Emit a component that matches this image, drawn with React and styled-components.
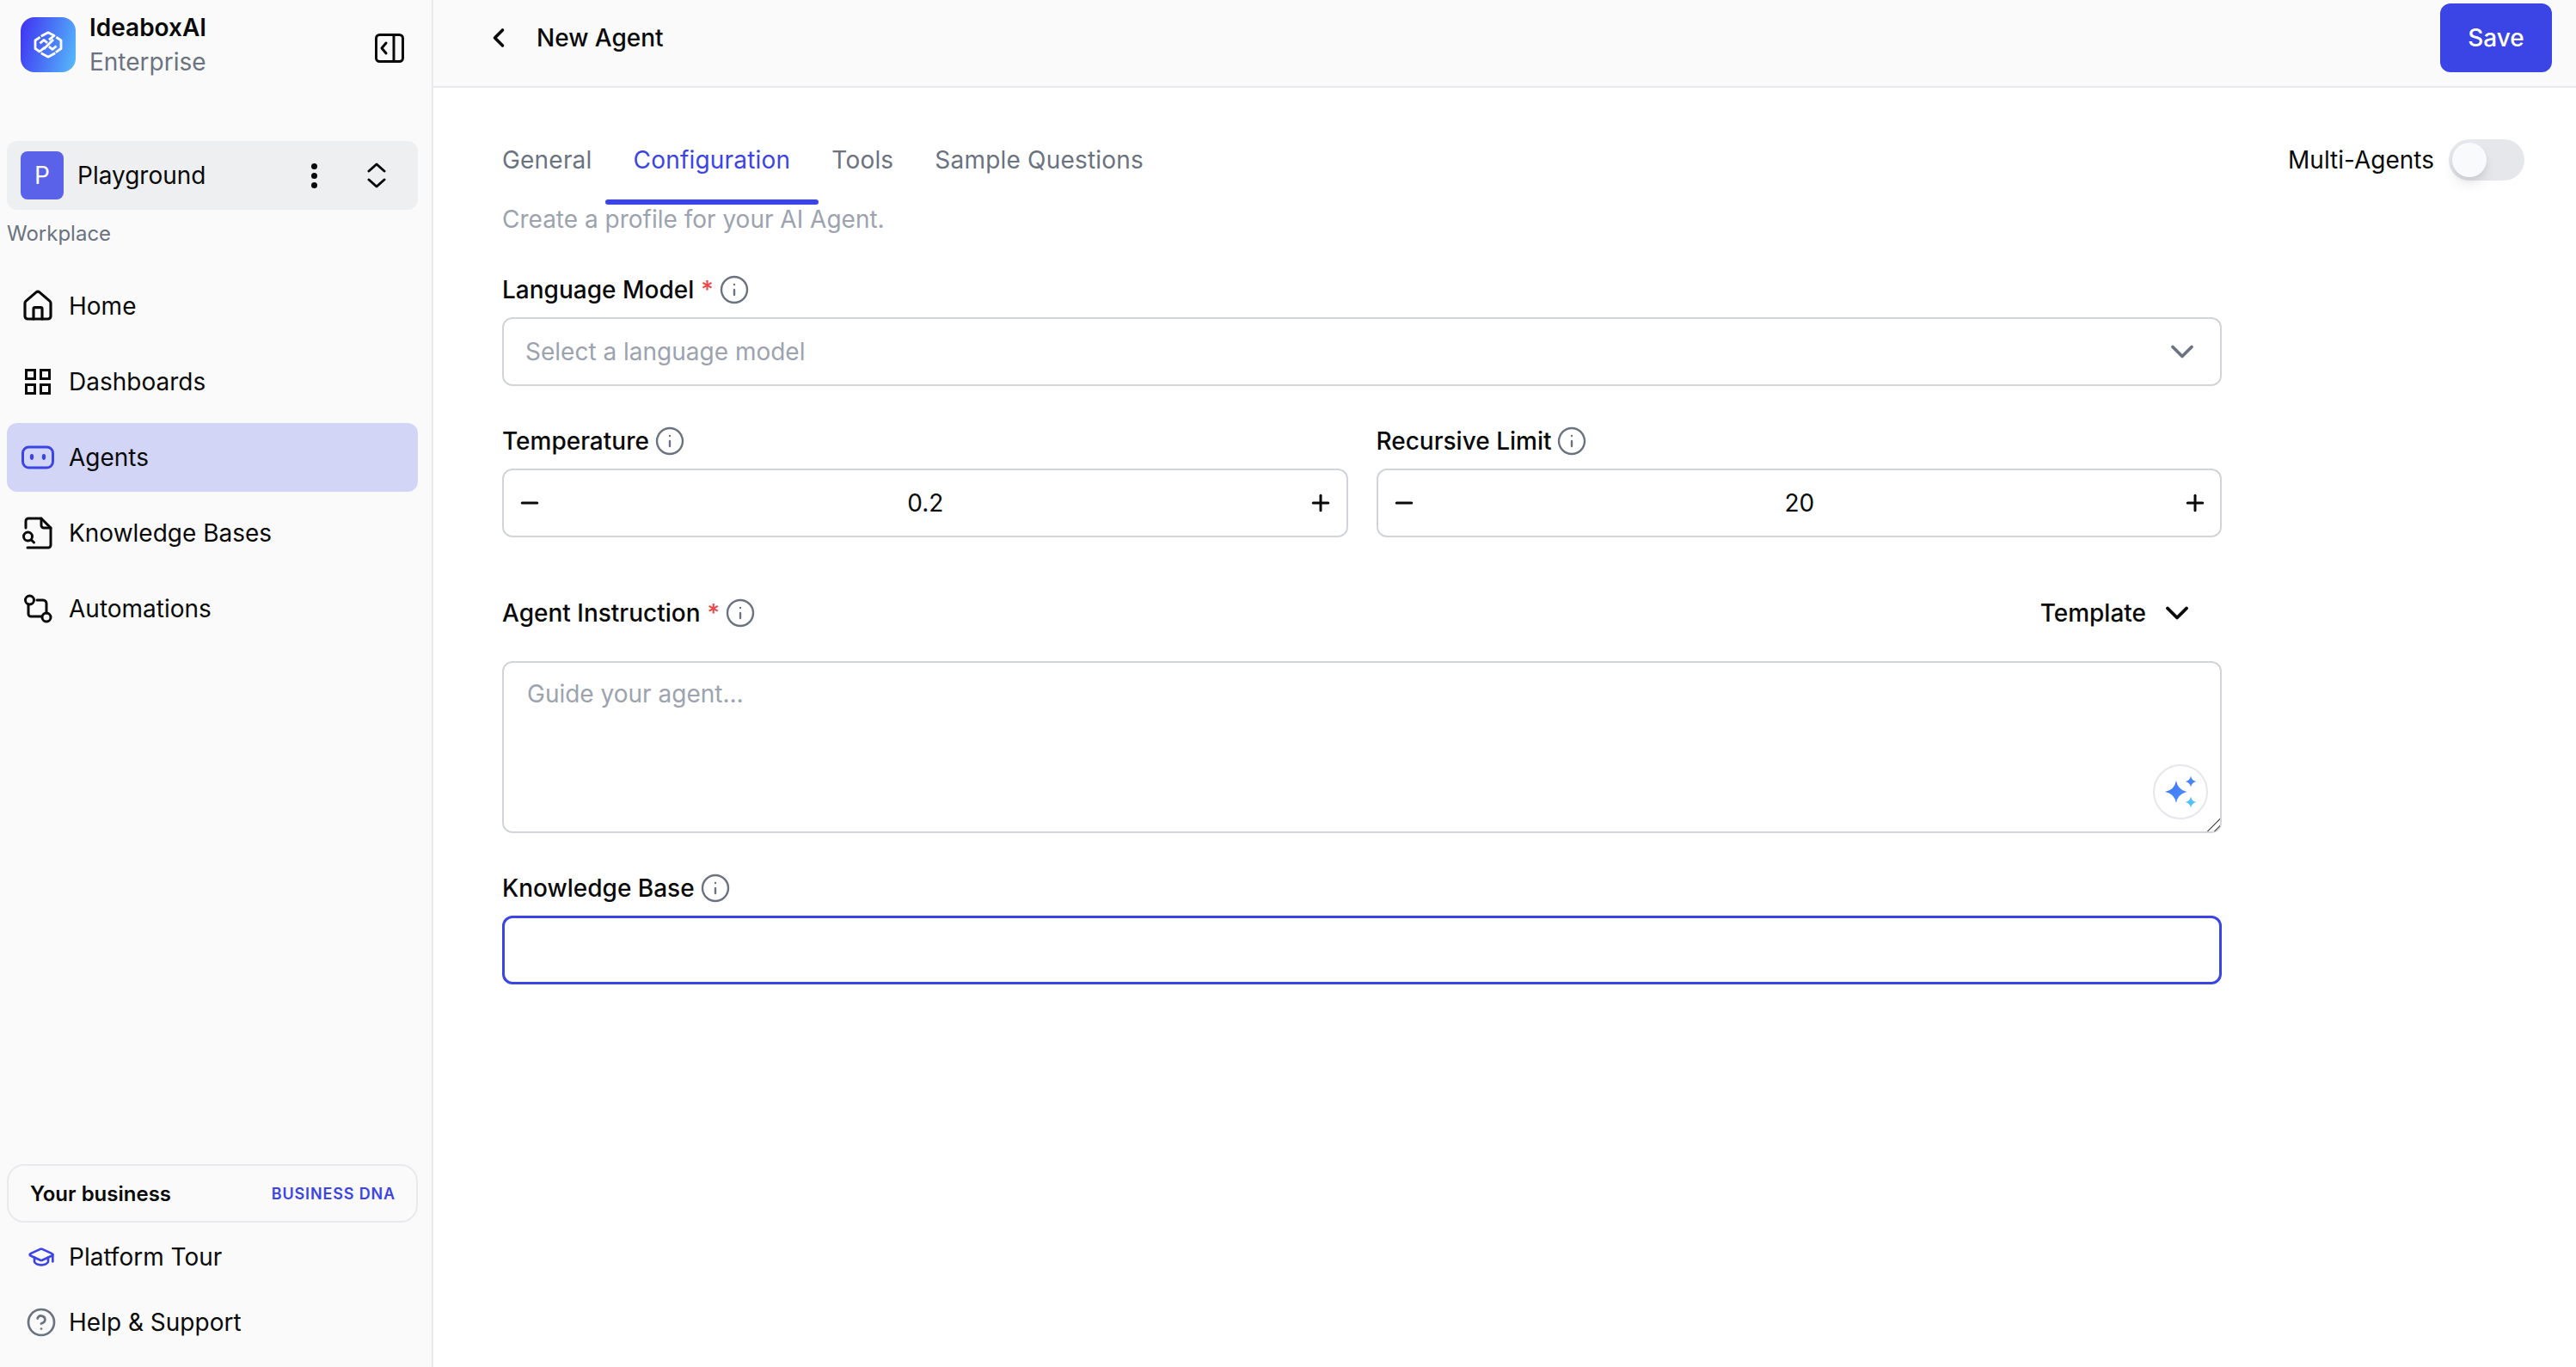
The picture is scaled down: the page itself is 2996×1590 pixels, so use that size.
import React from 'react'
import styled, { createGlobalStyle } from 'styled-components'
import { ChevronDown, ChevronLeft, CircleHelp, GraduationCap, Info, Minus, Plus } from 'lucide-react'

const GlobalStyle = createGlobalStyle`
  html, body {
    margin: 0;
    padding: 0;
    background: #fff;
  }
  * {
    box-sizing: border-box;
  }
  body {
    font-family: Inter, "Noto Sans", sans-serif;
    color: #0a0a0a;
  }
`

const Page = styled.div`
  display: flex;
  height: 1590px;
  overflow: hidden;
`

const Sidebar = styled.aside`
  display: flex;
  flex-direction: column;
  flex: 0 0 504px;
  padding: 0 16px 0 8px;
  background: #fafafb;
  border-right: 2px solid #e9eaee;
`

const Brand = styled.div`
  display: flex;
  align-items: center;
  height: 164px;
  padding: 20px 16px 80px 16px;
`

const LogoMark = styled.div`
  display: flex;
  align-items: center;
  justify-content: center;
  flex: 0 0 64px;
  width: 64px;
  height: 64px;
  border-radius: 16px;
  background: linear-gradient(105deg, #4030f2 0%, #4a7cf6 55%, #57bdfb 100%);
`

const BrandText = styled.div`
  display: flex;
  flex-direction: column;
  margin-left: 16px;
  flex: 1;
`

const BrandName = styled.span`
  font-size: 28px;
  line-height: 40px;
  font-weight: 600;
`

const BrandPlan = styled.span`
  font-size: 28px;
  line-height: 40px;
  color: #6b7280;
`

const CollapseBtn = styled.button`
  display: flex;
  padding: 0;
  margin: 7px 0 0;
  border: none;
  background: transparent;
`

const WorkspaceCard = styled.div`
  display: flex;
  align-items: center;
  height: 80px;
  padding: 0 37px 0 16px;
  border-radius: 12px;
  background: #eeeff1;
`

const WorkspaceBadge = styled.div`
  display: flex;
  align-items: center;
  justify-content: center;
  width: 50px;
  height: 56px;
  border-radius: 8px;
  background: #5a62e9;
  color: #fff;
  font-size: 28px;
`

const WorkspaceName = styled.span`
  flex: 1;
  margin-left: 16px;
  font-size: 28px;
`

const WorkspaceDots = styled.div`
  display: flex;
  flex-direction: column;
  gap: 4px;
  margin-right: 58px;
  span {
    width: 7px;
    height: 7px;
    border-radius: 50%;
    background: #0a0a0a;
  }
`

const SectionLabel = styled.div`
  height: 72px;
  padding: 12px 0 0 0;
  font-size: 24px;
  line-height: 32px;
  color: #6b7280;
`

const NavList = styled.nav`
  display: flex;
  flex-direction: column;
  gap: 8px;
`

const NavItem = styled.a`
  display: flex;
  align-items: center;
  gap: 16px;
  height: 80px;
  padding-left: 16px;
  border-radius: 12px;
  font-size: 28px;
  color: #0a0a0a;
  background: ${props => (props.$active ? '#d3d5f6' : 'transparent')};
`

const NavIcon = styled.span`
  display: flex;
  align-items: center;
  justify-content: center;
  flex: 0 0 40px;
  height: 40px;
`

const Spacer = styled.div`
  flex: 1;
`

const BusinessCard = styled.div`
  display: flex;
  align-items: center;
  justify-content: space-between;
  height: 68px;
  padding: 0 24px 0 25px;
  border: 2px solid #e9eaee;
  border-radius: 20px;
`

const BusinessTitle = styled.span`
  font-size: 24px;
  font-weight: 600;
`

const BusinessTag = styled.span`
  font-size: 18px;
  font-weight: 600;
  letter-spacing: 0.85px;
  color: #3b44e5;
`

const FooterLinks = styled.div`
  display: flex;
  flex-direction: column;
  padding: 2px 0 14px;
`

const FooterLink = styled.a`
  display: flex;
  align-items: center;
  gap: 12px;
  height: 76px;
  padding-left: 20px;
  font-size: 28px;
  color: #0a0a0a;
`

const Main = styled.main`
  flex: 1;
  min-width: 0;
  display: flex;
  flex-direction: column;
`

const TopBar = styled.header`
  display: flex;
  align-items: center;
  height: 102px;
  padding: 4px 28px 16px 58px;
  background: #fafafb;
  border-bottom: 2px solid #e9eaee;
`

const BackBtn = styled.button`
  display: flex;
  padding: 0;
  border: none;
  background: transparent;
  color: #0a0a0a;
`

const PageTitle = styled.h1`
  flex: 1;
  margin: 0 0 0 26px;
  font-size: 28px;
  font-weight: 500;
`

const SaveBtn = styled.button`
  width: 130px;
  height: 80px;
  border: none;
  border-radius: 12px;
  background: #3b44e5;
  color: #fff;
  font-family: inherit;
  font-size: 28px;
  font-weight: 500;
`

const Content = styled.div`
  padding: 60px 60px 0 80px;
`

const TabRow = styled.div`
  display: flex;
  align-items: flex-start;
  justify-content: space-between;
  height: 76px;
`

const Tabs = styled.div`
  display: flex;
  gap: 48px;
`

const Tab = styled.button`
  position: relative;
  padding: 0;
  border: none;
  background: transparent;
  font-family: inherit;
  font-size: 28px;
  line-height: 48px;
  letter-spacing: 0.2px;
  color: ${props => (props.$active ? '#3b44e5' : '#6b7280')};
  ${props => props.$active && `
    &::after {
      content: '';
      position: absolute;
      left: -33px;
      right: -33px;
      top: 70px;
      height: 6px;
      border-radius: 3px;
      background: #3b44e5;
    }
  `}
`

const ToggleWrap = styled.div`
  display: flex;
  align-items: center;
  gap: 17px;
  font-size: 28px;
  line-height: 48px;
`

const Toggle = styled.div`
  display: flex;
  align-items: center;
  width: 88px;
  height: 48px;
  padding: 4px;
  border-radius: 24px;
  background: #e5e7eb;
`

const ToggleKnob = styled.div`
  width: 40px;
  height: 40px;
  border-radius: 50%;
  background: #f9fafb;
  box-shadow: 0 10px 14px rgba(0, 0, 0, 0.07), 0 4px 6px rgba(0, 0, 0, 0.05);
`

const Hint = styled.p`
  margin: 0;
  font-size: 28px;
  line-height: 34px;
  color: #9ca3af;
`

const Form = styled.div`
  width: 2000px;
`

const LabelRow = styled.div`
  display: flex;
  align-items: center;
  justify-content: space-between;
  height: 40px;
  margin-top: ${props => props.$top || 44}px;
  margin-bottom: ${props => props.$bottom || 12}px;
`

const Label = styled.label`
  display: flex;
  align-items: center;
  font-size: 28px;
  font-weight: 500;
`

const Required = styled.span`
  margin-left: 8px;
  color: #ef4444;
`

const InfoIcon = styled(Info)`
  margin-left: 6px;
  color: #6b7280;
`

const SelectBox = styled.div`
  display: flex;
  align-items: center;
  justify-content: space-between;
  height: 80px;
  padding: 0 22px 0 25px;
  border: 2px solid #d1d5db;
  border-radius: 12px;
  font-size: 28px;
  color: #9ca3af;
  svg {
    color: #6b7280;
  }
`

const TwoColumns = styled.div`
  display: grid;
  grid-template-columns: 1fr 1fr;
  gap: 33px;
`

const Stepper = styled.div`
  display: flex;
  align-items: center;
  justify-content: space-between;
  height: 80px;
  padding: 0 14px 0 15px;
  border: 2px solid #d1d5db;
  border-radius: 12px;
  font-size: 28px;
  svg {
    color: #0a0a0a;
  }
`

const TemplateBtn = styled.button`
  display: flex;
  align-items: center;
  gap: 14px;
  padding: 0;
  margin-right: 30px;
  border: none;
  background: transparent;
  font-family: inherit;
  font-size: 28px;
  font-weight: 500;
  color: #0a0a0a;
`

const TextareaWrap = styled.div`
  position: relative;
  display: flex;
`

const Textarea = styled.textarea`
  width: 100%;
  height: 200px;
  padding: 19px 27px;
  border: 2px solid #d1d5db;
  border-radius: 12px;
  outline: none;
  resize: both;
  font-family: inherit;
  font-size: 28px;
  line-height: 34px;
  &::placeholder {
    color: #9ca3af;
    opacity: 1;
  }
  &::-webkit-resizer {
    background: linear-gradient(135deg, transparent 48%, #6f6f6f 48%, #6f6f6f 56%, transparent 56%, transparent 74%, #6f6f6f 74%, #6f6f6f 82%, transparent 82%);
  }
`

const AiButton = styled.button`
  position: absolute;
  right: 16px;
  bottom: 16px;
  display: flex;
  align-items: center;
  justify-content: center;
  width: 64px;
  height: 64px;
  padding: 0;
  border: 2px solid #e5e7eb;
  border-radius: 50%;
  background: #fff;
`

const KbInput = styled.input`
  display: block;
  width: 100%;
  height: 80px;
  padding: 0 24px;
  border: 3px solid #3b44e5;
  border-radius: 12px;
  outline: none;
  font-family: inherit;
  font-size: 28px;
`

const LogoGlyph = () => (
  <svg width="34" height="32" viewBox="0 0 34 32" fill="none" stroke="#fff" strokeWidth="2.8" strokeLinejoin="round" strokeLinecap="square">
    <path d="M10 5.5 L17 1.8 L24 5.5 L19 9.5" />
    <path d="M6.5 8 L2 11 V20.5 L7 24 L12 20" />
    <path d="M27.5 8 L32 11 V20.5 L27 24" />
    <path d="M10 26.5 L17 30.2 L24 26.5" />
    <path d="M8.5 13.5 L12 10.5 L15 13" />
    <path d="M25.5 18.5 L22 21.5 L19 19" />
    <path d="M13 20 L22 11" />
  </svg>
)

const CollapseIcon = () => (
  <svg width="34" height="34" viewBox="0 0 34 34" fill="none" stroke="#0a0a0a" strokeWidth="3" strokeLinecap="round" strokeLinejoin="round">
    <rect x="1.5" y="1.5" width="31" height="31" rx="4" />
    <path d="M22 2v30" />
    <path d="M13 11l-5 6 5 6" />
  </svg>
)

const UpDownIcon = () => (
  <svg width="22" height="30" viewBox="0 0 22 30" fill="none" stroke="#0a0a0a" strokeWidth="3" strokeLinecap="round" strokeLinejoin="round">
    <path d="M2 10l9-8 9 8" />
    <path d="M2 20l9 8 9-8" />
  </svg>
)

const HomeIcon = () => (
  <svg width="40" height="40" viewBox="0 0 24 24" fill="none" stroke="#0a0a0a" strokeWidth="1.9" strokeLinecap="round" strokeLinejoin="round">
    <path d="M15 21v-7a1 1 0 0 0-1-1h-4a1 1 0 0 0-1 1v7" />
    <path d="M3 10a2 2 0 0 1 .709-1.528l7-5.999a2 2 0 0 1 2.582 0l7 5.999A2 2 0 0 1 21 10v9a2 2 0 0 1-2 2H5a2 2 0 0 1-2-2z" />
  </svg>
)

const DashboardIcon = () => (
  <svg width="32" height="32" viewBox="0 0 32 32" fill="none" stroke="#0a0a0a" strokeWidth="3">
    <rect x="2.5" y="2.5" width="10" height="10" />
    <rect x="19.5" y="2.5" width="10" height="10" />
    <rect x="2.5" y="19.5" width="10" height="10" />
    <rect x="19.5" y="19.5" width="10" height="10" />
  </svg>
)

const AgentIcon = () => (
  <svg width="40" height="28" viewBox="0 0 40 28" fill="none">
    <rect x="2.5" y="2" width="35" height="24" rx="7" stroke="#3b44e5" strokeWidth="3" />
    <ellipse cx="13" cy="13.5" rx="2.2" ry="3.4" fill="#3b44e5" />
    <ellipse cx="27" cy="13.5" rx="2.2" ry="3.4" fill="#3b44e5" />
  </svg>
)

const KnowledgeIcon = () => (
  <svg width="36" height="38" viewBox="0 0 36 38" fill="none" stroke="#0a0a0a" strokeWidth="3" strokeLinecap="round" strokeLinejoin="round">
    <path d="M4 13V5a3 3 0 0 1 3-3h15l11 11v20a3 3 0 0 1-3 3H6" />
    <path d="M22 2v8a3 3 0 0 0 3 3h8" />
    <circle cx="6.5" cy="23" r="5" />
    <path d="M10.5 27l3 3" />
  </svg>
)

const AutomationIcon = () => (
  <svg width="36" height="36" viewBox="0 0 36 36" fill="none" stroke="#0a0a0a" strokeWidth="3" strokeLinecap="round" strokeLinejoin="round">
    <circle cx="8.5" cy="8" r="5" />
    <circle cx="28" cy="28" r="5" />
    <path d="M7 13v11a3 3 0 0 0 3 3h12" />
    <path d="M17 8h7a4 4 0 0 1 4 4v11" />
  </svg>
)

const SparkleIcon = () => (
  <svg width="46" height="46" viewBox="-3 0 46 46">
    <defs>
      <linearGradient id="sparkBlue" x1="0" y1="0" x2="1" y2="1">
        <stop offset="0" stopColor="#3f6ef7" />
        <stop offset="1" stopColor="#4b97fb" />
      </linearGradient>
    </defs>
    <path d="M15 10 Q17 21 28 23 Q17 25 15 36 Q13 25 2 23 Q13 21 15 10Z" fill="url(#sparkBlue)" />
    <path d="M32 4.5 Q33 10 38.5 11 Q33 12 32 17.5 Q31 12 25.5 11 Q31 10 32 4.5Z" fill="#4a86fa" />
    <path d="M32 28.5 Q33 34 38.5 35 Q33 36 32 41.5 Q31 36 25.5 35 Q31 34 32 28.5Z" fill="#55c0fb" />
  </svg>
)

const navItems = [
  { label: 'Home', icon: <HomeIcon /> },
  { label: 'Dashboards', icon: <DashboardIcon /> },
  { label: 'Agents', icon: <AgentIcon />, active: true },
  { label: 'Knowledge Bases', icon: <KnowledgeIcon /> },
  { label: 'Automations', icon: <AutomationIcon /> },
]

const tabs = ['General', 'Configuration', 'Tools', 'Sample Questions']

const InfoMark = () => <InfoIcon size={36} strokeWidth={1.6} />

const App = () => {
  return (
    <Page>
      <GlobalStyle />
      <Sidebar>
        <Brand>
          <LogoMark>
            <LogoGlyph />
          </LogoMark>
          <BrandText>
            <BrandName>IdeaboxAI</BrandName>
            <BrandPlan>Enterprise</BrandPlan>
          </BrandText>
          <CollapseBtn>
            <CollapseIcon />
          </CollapseBtn>
        </Brand>
        <WorkspaceCard>
          <WorkspaceBadge>P</WorkspaceBadge>
          <WorkspaceName>Playground</WorkspaceName>
          <WorkspaceDots>
            <span />
            <span />
            <span />
          </WorkspaceDots>
          <UpDownIcon />
        </WorkspaceCard>
        <SectionLabel>Workplace</SectionLabel>
        <NavList>
          {navItems.map(item => (
            <NavItem key={item.label} $active={item.active}>
              <NavIcon>{item.icon}</NavIcon>
              {item.label}
            </NavItem>
          ))}
        </NavList>
        <Spacer />
        <BusinessCard>
          <BusinessTitle>Your business</BusinessTitle>
          <BusinessTag>BUSINESS DNA</BusinessTag>
        </BusinessCard>
        <FooterLinks>
          <FooterLink>
            <NavIcon>
              <GraduationCap size={32} color="#3b44e5" strokeWidth={2} />
            </NavIcon>
            Platform Tour
          </FooterLink>
          <FooterLink>
            <NavIcon>
              <CircleHelp size={36} color="#6b7280" strokeWidth={1.8} />
            </NavIcon>
            Help &amp; Support
          </FooterLink>
        </FooterLinks>
      </Sidebar>
      <Main>
        <TopBar>
          <BackBtn>
            <ChevronLeft size={36} strokeWidth={2.4} />
          </BackBtn>
          <PageTitle>New Agent</PageTitle>
          <SaveBtn>Save</SaveBtn>
        </TopBar>
        <Content>
          <TabRow>
            <Tabs>
              {tabs.map(tab => (
                <Tab key={tab} $active={tab === 'Configuration'}>{tab}</Tab>
              ))}
            </Tabs>
            <ToggleWrap>
              Multi-Agents
              <Toggle>
                <ToggleKnob />
              </Toggle>
            </ToggleWrap>
          </TabRow>
          <Hint>Create a profile for your AI Agent.</Hint>
          <Form>
            <LabelRow $top={45}>
              <Label>Language Model<Required>*</Required><InfoMark /></Label>
            </LabelRow>
            <SelectBox>
              Select a language model
              <ChevronDown size={44} strokeWidth={2} />
            </SelectBox>
            <TwoColumns>
              <div>
                <LabelRow>
                  <Label>Temperature<InfoMark /></Label>
                </LabelRow>
                <Stepper>
                  <Minus size={30} strokeWidth={2.4} />
                  0.2
                  <Plus size={30} strokeWidth={2.4} />
                </Stepper>
              </div>
              <div>
                <LabelRow>
                  <Label>Recursive Limit<InfoMark /></Label>
                </LabelRow>
                <Stepper>
                  <Minus size={30} strokeWidth={2.4} />
                  20
                  <Plus size={30} strokeWidth={2.4} />
                </Stepper>
              </div>
            </TwoColumns>
            <LabelRow $top={68} $bottom={36}>
              <Label>Agent Instruction<Required>*</Required><InfoMark /></Label>
              <TemplateBtn>
                Template
                <ChevronDown size={44} strokeWidth={2.1} />
              </TemplateBtn>
            </LabelRow>
            <TextareaWrap>
              <Textarea placeholder="Guide your agent..." />
              <AiButton>
                <SparkleIcon />
              </AiButton>
            </TextareaWrap>
            <LabelRow $top={44} $bottom={12}>
              <Label>Knowledge Base<InfoMark /></Label>
            </LabelRow>
            <KbInput />
          </Form>
        </Content>
      </Main>
    </Page>
  )
}

export default App
